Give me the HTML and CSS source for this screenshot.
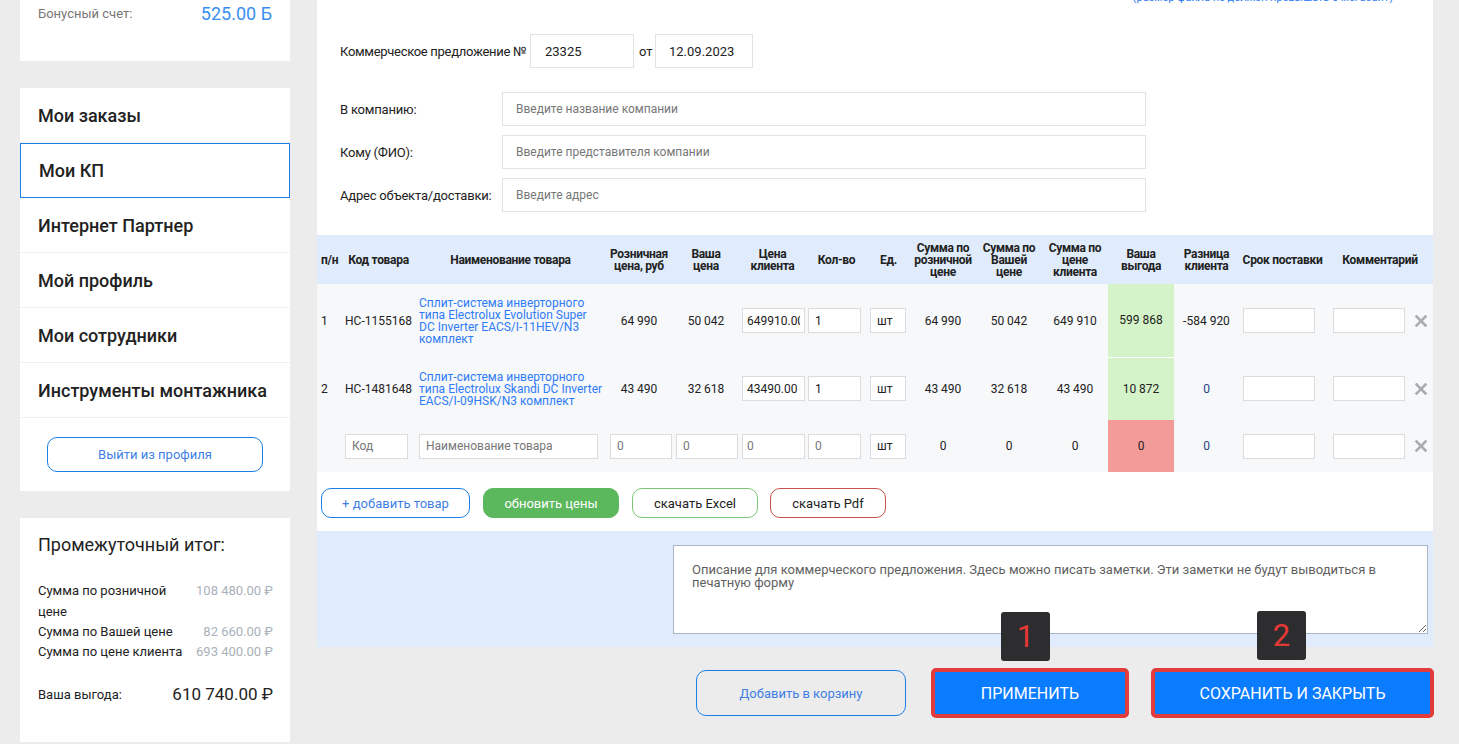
FILE: index.html
```html
<!DOCTYPE html>
<html lang="ru">
<head>
<meta charset="utf-8">
<title>Мои КП</title>
<link rel="stylesheet" href="styles.css">
</head>
<body>
<div class="page">
  <aside class="sidebar">
    <div class="card bonus">
      <div class="bonus-row"><span class="bonus-label">Бонусный счет:</span><span class="bonus-value">525.00 Б</span></div>
    </div>
    <nav class="card menu">
      <a class="menu-item">Мои заказы</a>
      <a class="menu-item active">Мои КП</a>
      <a class="menu-item">Интернет Партнер</a>
      <a class="menu-item">Мой профиль</a>
      <a class="menu-item">Мои сотрудники</a>
      <a class="menu-item">Инструменты монтажника</a>
      <div class="logout-wrap"><button class="btn-logout">Выйти из профиля</button></div>
    </nav>
    <div class="card subtotal">
      <h3 class="subtotal-title">Промежуточный итог:</h3>
      <div class="sum-row"><span class="sum-label">Сумма по розничной цене</span><span class="sum-val">108 480.00 ₽</span></div>
      <div class="sum-row"><span class="sum-label">Сумма по Вашей цене</span><span class="sum-val">82 660.00 ₽</span></div>
      <div class="sum-row"><span class="sum-label">Сумма по цене клиента</span><span class="sum-val">693 400.00 ₽</span></div>
      <div class="benefit"><span class="benefit-label">Ваша выгода:</span><span class="benefit-val">610 740.00 ₽</span></div>
    </div>
  </aside>

  <main class="main">
    <section class="panel">
      <div class="note"><span>(размер файла не должен превышать 5 мегабайт)</span></div>

      <div class="kp-row">
        <span class="kp-label">Коммерческое предложение №</span>
        <input class="inp kp-num" type="text" value="23325">
        <span class="kp-of">от</span>
        <input class="inp kp-date" type="text" value="12.09.2023">
      </div>

      <div class="fields">
        <div class="field-row"><label class="field-label">В компанию:</label><input class="inp field-input" type="text" placeholder="Введите название компании"></div>
        <div class="field-row"><label class="field-label">Кому (ФИО):</label><input class="inp field-input" type="text" placeholder="Введите представителя компании"></div>
        <div class="field-row"><label class="field-label">Адрес объекта/доставки:</label><input class="inp field-input" type="text" placeholder="Введите адрес"></div>
      </div>

      <table class="grid">
        <colgroup>
          <col style="width:24px"><col style="width:75px"><col style="width:189px"><col style="width:68px">
          <col style="width:66px"><col style="width:67px"><col style="width:61px"><col style="width:43px">
          <col style="width:66px"><col style="width:66px"><col style="width:66px"><col style="width:66px">
          <col style="width:65px"><col style="width:87px"><col style="width:86px"><col style="width:21px">
        </colgroup>
        <thead>
          <tr>
            <th class="h-num">п/н</th>
            <th>Код товара</th>
            <th>Наименование товара</th>
            <th>Розничная<br>цена, руб</th>
            <th>Ваша<br>цена</th>
            <th>Цена<br>клиента</th>
            <th>Кол-во</th>
            <th>Ед.</th>
            <th>Сумма по<br>розничной<br>цене</th>
            <th>Сумма по<br>Вашей<br>цене</th>
            <th>Сумма по<br>цене<br>клиента</th>
            <th>Ваша<br>выгода</th>
            <th>Разница<br>клиента</th>
            <th>Срок поставки</th>
            <th colspan="2" class="h-comment">Комментарий</th>
          </tr>
        </thead>
        <tbody>
          <tr class="r1">
            <td class="c-num">1</td>
            <td>НС-1155168</td>
            <td class="c-name"><a class="prod">Сплит-система инверторного<br>типа Electrolux Evolution Super<br>DC Inverter EACS/I-11HEV/N3<br>комплект</a></td>
            <td>64 990</td>
            <td>50 042</td>
            <td><input class="ti w-client" type="text" value="649910.00"></td>
            <td><input class="ti w-qty" type="text" value="1"></td>
            <td><input class="ti w-unit" type="text" value="шт"></td>
            <td>64 990</td>
            <td>50 042</td>
            <td>649 910</td>
            <td class="good sep">599 868</td>
            <td>-584 920</td>
            <td><input class="ti w-term" type="text"></td>
            <td><input class="ti w-comm" type="text"></td>
            <td class="c-x"><svg width="12" height="12" viewBox="0 0 12 12"><path d="M1.5 1.5 L10.5 10.5 M10.5 1.5 L1.5 10.5" stroke="#a9adb2" stroke-width="2.6" stroke-linecap="square"/></svg></td>
          </tr>
          <tr class="r2">
            <td class="c-num">2</td>
            <td>НС-1481648</td>
            <td class="c-name"><a class="prod">Сплит-система инверторного<br>типа Electrolux Skandi DC Inverter<br>EACS/I-09HSK/N3 комплект</a></td>
            <td>43 490</td>
            <td>32 618</td>
            <td><input class="ti w-client" type="text" value="43490.00"></td>
            <td><input class="ti w-qty" type="text" value="1"></td>
            <td><input class="ti w-unit" type="text" value="шт"></td>
            <td>43 490</td>
            <td>32 618</td>
            <td>43 490</td>
            <td class="good">10 872</td>
            <td class="diff">0</td>
            <td><input class="ti w-term" type="text"></td>
            <td><input class="ti w-comm" type="text"></td>
            <td class="c-x"><svg width="12" height="12" viewBox="0 0 12 12"><path d="M1.5 1.5 L10.5 10.5 M10.5 1.5 L1.5 10.5" stroke="#a9adb2" stroke-width="2.6" stroke-linecap="square"/></svg></td>
          </tr>
          <tr class="r3">
            <td class="c-num"></td>
            <td><input class="ti w-code muted" type="text" placeholder="Код"></td>
            <td><input class="ti w-name muted" type="text" placeholder="Наименование товара"></td>
            <td><input class="ti w-retail muted" type="text" value="0"></td>
            <td><input class="ti w-your muted" type="text" value="0"></td>
            <td><input class="ti w-client muted" type="text" value="0"></td>
            <td><input class="ti w-qty muted" type="text" value="0"></td>
            <td><input class="ti w-unit" type="text" value="шт"></td>
            <td>0</td>
            <td>0</td>
            <td>0</td>
            <td class="bad">0</td>
            <td class="diff">0</td>
            <td><input class="ti w-term" type="text"></td>
            <td><input class="ti w-comm" type="text"></td>
            <td class="c-x"><svg width="12" height="12" viewBox="0 0 12 12"><path d="M1.5 1.5 L10.5 10.5 M10.5 1.5 L1.5 10.5" stroke="#a9adb2" stroke-width="2.6" stroke-linecap="square"/></svg></td>
          </tr>
        </tbody>
      </table>

      <div class="tools">
        <button class="tbtn t-add">+ добавить товар</button>
        <button class="tbtn t-update">обновить цены</button>
        <button class="tbtn t-excel">скачать Excel</button>
        <button class="tbtn t-pdf">скачать Pdf</button>
      </div>

      <div class="notes">
        <textarea class="notes-area" placeholder="Описание для коммерческого предложения. Здесь можно писать заметки. Эти заметки не будут выводиться в печатную форму"></textarea>
      </div>
    </section>

    <div class="actions">
      <button class="btn-cart">Добавить в корзину</button>
      <div class="act-wrap act-apply">
        <span class="badge b1">1</span>
        <button class="btn-primary apply">ПРИМЕНИТЬ</button>
      </div>
      <div class="act-wrap act-save">
        <span class="badge b2">2</span>
        <button class="btn-primary save">СОХРАНИТЬ И ЗАКРЫТЬ</button>
      </div>
    </div>
  </main>
</div>
</body>
</html>
```

FILE: styles.css
```css
* { box-sizing: border-box; }

body {
  margin: 0;
  background: #ececec;
  font-family: Roboto, "Liberation Sans", Arial, sans-serif;
  color: #222;
  overflow: hidden;
}

.page {
  display: flex;
  gap: 27px;
  padding-left: 20px;
}

/* ---------- Sidebar ---------- */
.sidebar {
  width: 270px;
  flex: none;
  display: flex;
  flex-direction: column;
  gap: 27px;
}

.card { background: #fff; }

.bonus {
  height: 61px;
  padding: 0 18px;
}

.bonus-row {
  height: 26px;
  display: flex;
  align-items: center;
  justify-content: space-between;
}

.bonus-label { font-size: 13px; color: #777; }
.bonus-value { font-size: 18px; color: #3a8ef0; }

.menu {
  display: flex;
  flex-direction: column;
}

.menu-item {
  height: 55px;
  display: flex;
  align-items: center;
  padding-left: 18px;
  font-size: 18px;
  font-weight: 500;
  color: #222;
  border-bottom: 1px solid #f0f0f0;
}

.menu-item.active {
  border: 1px solid #1a7fe8;
}

.logout-wrap {
  padding: 19px 0;
  display: flex;
  justify-content: center;
}

.btn-logout {
  width: 216px;
  height: 35px;
  border: 1px solid #1a7fe8;
  border-radius: 10px;
  background: #fff;
  color: #3f7fe5;
  font-family: inherit;
  font-size: 13px;
}

.subtotal {
  height: 224px;
  padding: 16px 17px 0 18px;
}

.subtotal-title {
  margin: 0 0 24px;
  font-size: 18px;
  line-height: 22px;
  font-weight: 400;
  color: #222;
}

.sum-row {
  display: flex;
  justify-content: space-between;
  align-items: flex-start;
  font-size: 13px;
  line-height: 20px;
}

.sum-row:first-of-type { line-height: 21px; }

.sum-label { width: 150px; color: #222; }
.sum-val { color: #a9b1ba; }

.benefit {
  margin-top: 20px;
  display: flex;
  justify-content: space-between;
  align-items: center;
  height: 24px;
}

.benefit-label { font-size: 13px; }
.benefit-val { font-size: 17px; color: #222; }

/* ---------- Main ---------- */
.main {
  width: 1116px;
  flex: none;
}

.panel { background: #fff; }

.note {
  height: 4px;
  overflow: hidden;
}

.note span {
  display: block;
  margin-top: -9px;
  padding-right: 40px;
  text-align: right;
  font-size: 11px;
  line-height: 13px;
  color: #2f7cf6;
}

.inp {
  height: 34px;
  border: 1px solid #e3e3e3;
  background: #fff;
  font-family: inherit;
  color: #222;
  outline: none;
}

.kp-row {
  margin-top: 30px;
  padding-left: 23px;
  display: flex;
  align-items: center;
  height: 34px;
}

.kp-label {
  width: 190px;
  flex: none;
  white-space: nowrap;
  font-size: 13px;
  letter-spacing: -0.3px;
}
.kp-num { width: 104px; padding: 0 14px; font-size: 13px; }
.kp-of { width: 21px; padding-left: 5px; font-size: 13px; }
.kp-date { width: 98px; padding: 0 13px; font-size: 13px; }

.fields {
  margin-top: 24px;
  padding-left: 23px;
  display: flex;
  flex-direction: column;
  gap: 9px;
}

.field-row {
  display: flex;
  align-items: center;
  height: 34px;
}

.field-label { width: 162px; font-size: 13px; letter-spacing: -0.2px; }

.field-input {
  width: 644px;
  padding: 0 13px;
  font-size: 12px;
}

.field-input::placeholder { color: #777; }

/* ---------- Table ---------- */
.grid {
  margin-top: 23px;
  width: 1116px;
  border-collapse: collapse;
  table-layout: fixed;
}

.grid th {
  background: #e0ecfc;
  height: 49px;
  padding: 0 1px;
  font-size: 12px;
  line-height: 12px;
  font-weight: 700;
  letter-spacing: -0.3px;
  text-align: center;
  vertical-align: middle;
  color: #222;
}

.grid th.h-num { text-align: left; padding-left: 4px; }
.grid th.h-comment { padding-right: 0; }

.grid td {
  background: #f7f8fa;
  padding: 0;
  font-size: 12px;
  text-align: center;
  vertical-align: middle;
  color: #222;
  white-space: nowrap;
}

.grid tr.r1 td { height: 73px; }
.grid tr.r2 td { height: 63px; }
.grid tr.r3 td { height: 52px; }

.grid td.c-num { text-align: left; padding-left: 4px; }

.grid td.c-name { text-align: left; padding-left: 3px; }

.prod {
  display: block;
  color: #2f7cf6;
  font-size: 12px;
  line-height: 12px;
}

.grid td.good { background: #d5f3c8; }
.grid td.good.sep { border-bottom: 1px solid #fff; }
.grid td.bad { background: #f29b98; }
.grid td.diff { color: #1f3f7f; }

.grid td.c-x { text-align: left; padding-left: 3px; }
.grid td.c-x svg { display: block; }

.ti {
  display: block;
  height: 25px;
  border: 1px solid #dcdcdc;
  background: #fff;
  font-family: inherit;
  font-size: 12px;
  color: #222;
  padding: 0 6px;
  outline: none;
}

.ti.muted { color: #777; }
.ti::placeholder { color: #777; }

.w-code { width: 63px; margin-left: 4px; }
.w-name { width: 179px; margin-left: 3px; }
.w-retail { width: 62px; margin-left: 5px; }
.w-your { width: 62px; margin-left: 3px; }
.w-client { width: 63px; margin-left: 3px; padding: 0 4px; }
.w-qty { width: 53px; margin-left: 2px; }
.w-unit { width: 36px; margin-left: 3px; }
.w-term { width: 72px; margin-left: 4px; }
.w-comm { width: 72px; margin-left: 7px; }

/* ---------- Tools ---------- */
.tools {
  display: flex;
  gap: 13px;
  padding: 16px 4px 13px;
}

.tbtn {
  height: 30px;
  border-radius: 10px;
  background: #fff;
  font-family: inherit;
  font-size: 13px;
  color: #222;
  border: 1px solid #ccc;
}

.t-add { width: 149px; border-color: #1a7fe8; color: #3f7fe5; }
.t-update { width: 136px; background: #5cb85c; border-color: #5cb85c; color: #fff; }
.t-excel { width: 126px; border-color: #7cc576; }
.t-pdf { width: 116px; border-color: #c9524e; margin-left: -1px; }

.notes {
  background: #e0ecfc;
  padding: 14px 5px 13px 356px;
}

.notes-area {
  display: block;
  width: 755px;
  height: 89px;
  border: 1px solid #a9b6c7;
  background: #fff;
  padding: 17px 18px;
  font-family: inherit;
  font-size: 13px;
  line-height: 13px;
  resize: vertical;
  outline: none;
}

.notes-area::placeholder { color: #5f5f5f; }

/* ---------- Actions ---------- */
.actions {
  margin-top: 21px;
  display: flex;
  justify-content: flex-end;
  align-items: center;
  margin-right: -1px;
}

.btn-cart {
  width: 210px;
  height: 46px;
  border: 1px solid #1a7fe8;
  border-radius: 10px;
  background: transparent;
  color: #3f7fe5;
  font-family: inherit;
  font-size: 13px;
  margin-right: 25px;
}

.act-wrap { position: relative; }
.act-apply { margin-right: 22px; }

.btn-primary {
  display: block;
  height: 50px;
  border: 4px solid #e23b3b;
  border-radius: 5px;
  background: #0a7cff;
  color: #fff;
  font-family: inherit;
  font-size: 16px;
  font-weight: 400;
}

.apply { width: 198px; }
.save { width: 283px; }

.badge {
  position: absolute;
  width: 49px;
  height: 49px;
  background: #2d2d2f;
  border-radius: 3px;
  color: #e53935;
  font-size: 31px;
  display: flex;
  align-items: center;
  justify-content: center;
}

.b1 { top: -56px; left: 70px; }
.b2 { top: -57px; left: 106px; }
```
